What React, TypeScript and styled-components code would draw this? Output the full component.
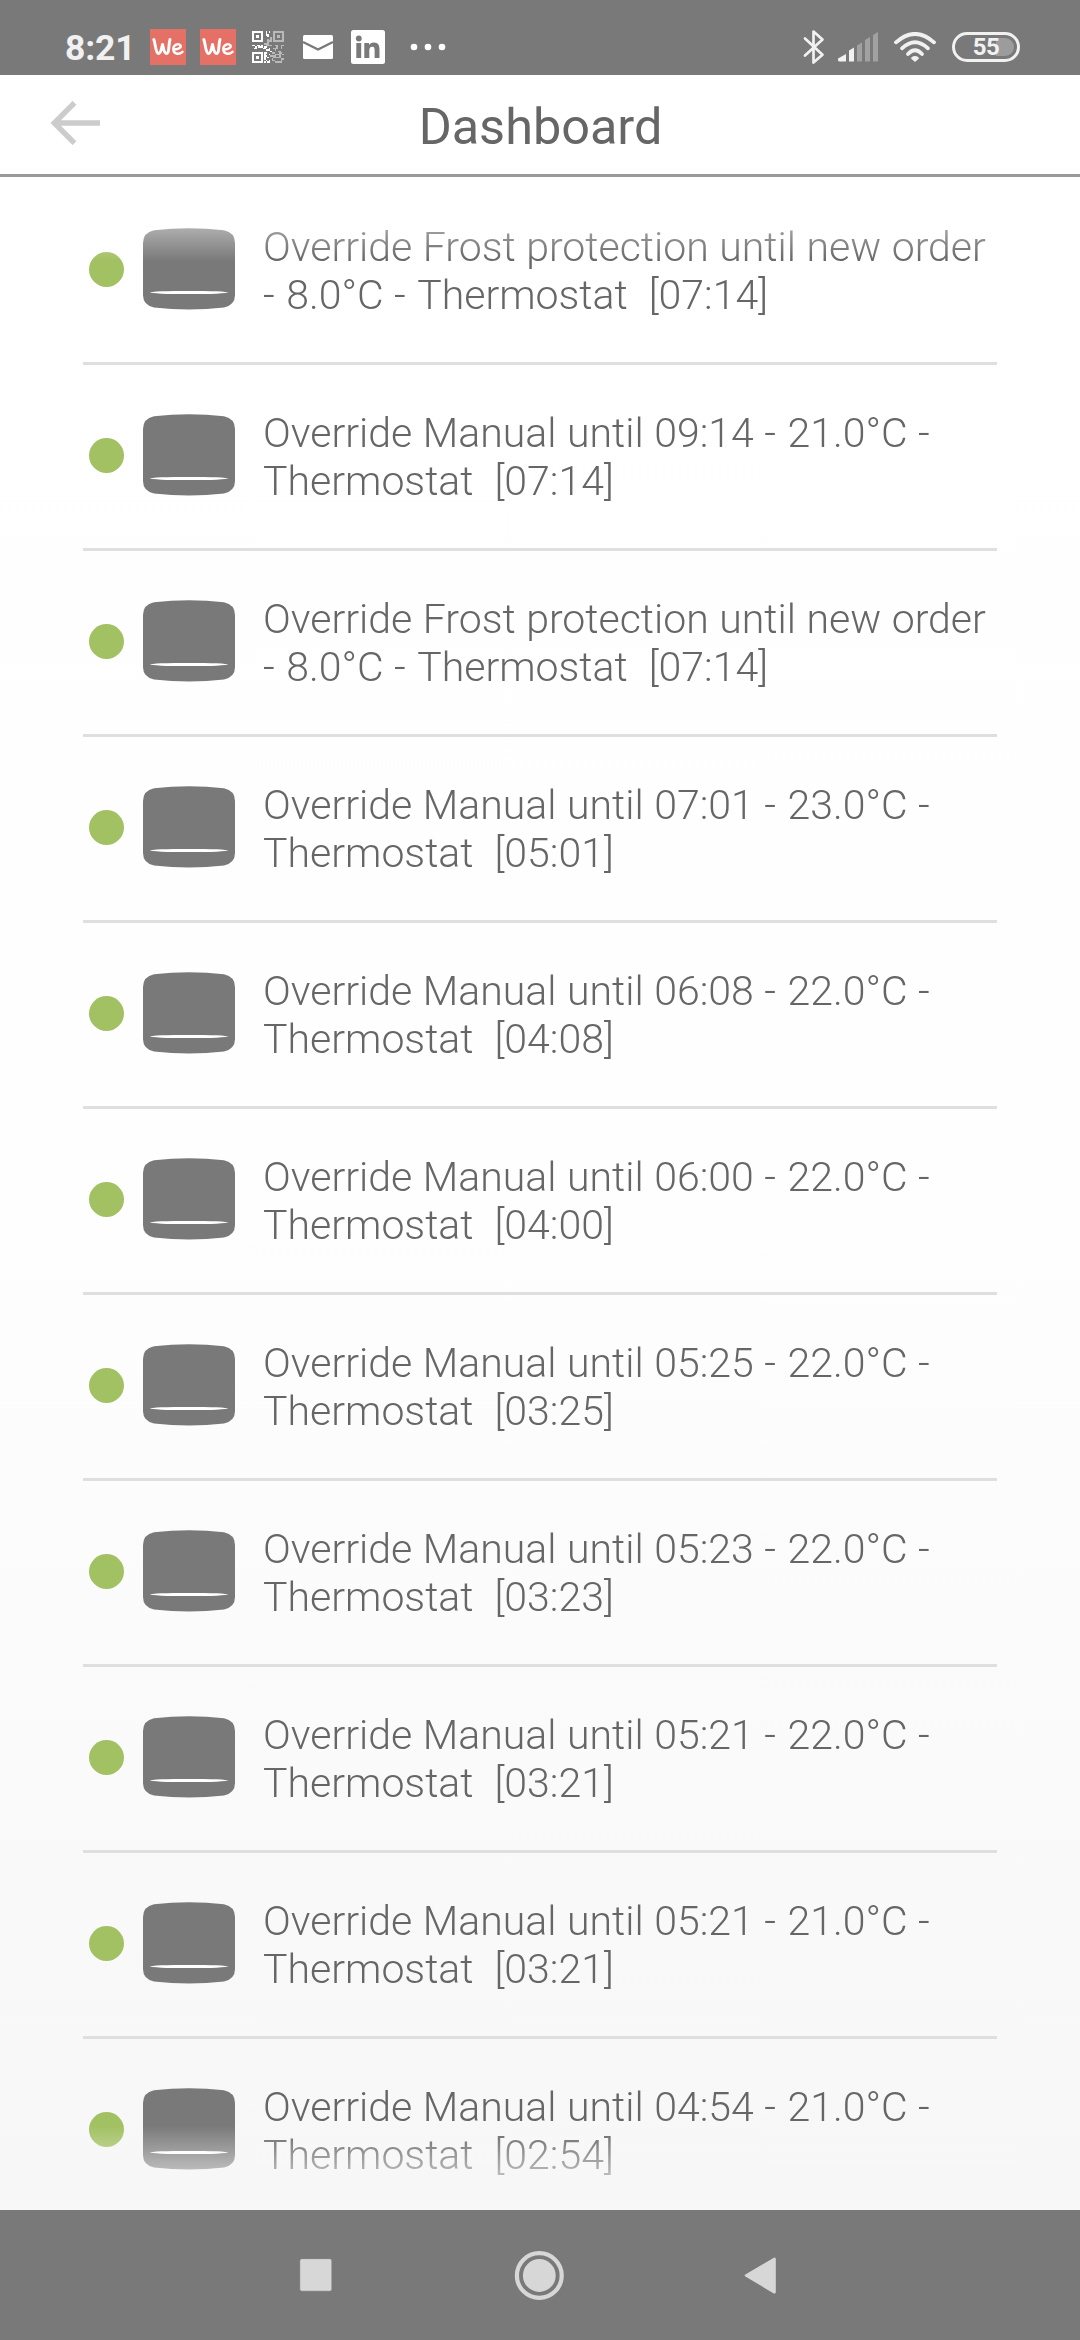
import React from "react";
import styled, { createGlobalStyle } from "styled-components";

const GlobalStyle = createGlobalStyle`
  html, body { margin: 0; padding: 0; }
  body { background: #fff; font-family: Roboto, "Liberation Sans", sans-serif; }
  * { box-sizing: border-box; }
  svg { display: block; flex: none; }
`;

const Screen = styled.div`
  width: 1080px;
  height: 2340px;
  display: flex;
  flex-direction: column;
  overflow: hidden;
  background: linear-gradient(to bottom, #fff 0, #fefefe 1200px, #f7f7f7 2210px);
`;

const StatusBar = styled.header`
  height: 75px;
  flex: none;
  display: flex;
  justify-content: space-between;
  padding: 19px 60px 0 65px;
  background: #797979;
`;

const StatusGroup = styled.div`
  display: flex;
  align-items: center;
  height: 56px;
`;

const Clock = styled.span`
  width: 85px;
  font-size: 35.5px;
  line-height: 56px;
  font-weight: 700;
  letter-spacing: -0.2px;
  color: #f1f1f1;
  padding-top: 2px;
`;

const WeTile = styled.span`
  width: 36px;
  height: 36px;
  margin-right: 14px;
  display: flex;
  align-items: center;
  justify-content: center;
  background: #e57166;
`;

const Gap = styled.span<{ $w: number }>`
  width: ${(p) => p.$w}px;
  flex: none;
`;

const TitleBar = styled.div`
  height: 102px;
  flex: none;
  display: grid;
  grid-template-columns: 150px 1fr 150px;
  align-items: center;
  border-bottom: 3px solid #999;
  background: #fff;
`;

const BackButton = styled.button`
  border: 0;
  padding: 0 0 4px 50px;
  background: none;
`;

const Title = styled.h1`
  margin: 0;
  text-align: center;
  font-size: 50.4px;
  line-height: 60px;
  padding: 4px 0 0 1px;
  font-weight: 400;
  color: #666;
`;

const Log = styled.main`
  flex: 1;
  min-height: 0;
  overflow: hidden;
  padding: 2px 83px 0;
  mask-image: linear-gradient(
    to bottom,
    transparent 0,
    #000 84px,
    #000 calc(100% - 84px),
    transparent 100%
  );
`;

const Entry = styled.article`
  height: 186px;
  display: flex;
  align-items: center;
  padding: 0 0 3px 6px;
  border-bottom: 3px solid #dfdfdf;
`;

const Dot = styled.span`
  width: 35px;
  height: 35px;
  flex: none;
  margin-right: 19px;
  border-radius: 50%;
  background: #a2c162;
`;

const Message = styled.p`
  margin: 0 0 0 28px;
  padding-top: 4px;
  font-size: 41px;
  line-height: 48px;
  font-weight: 300;
  word-spacing: 0.5px;
  color: #666;
  white-space: pre;
`;

/* Each word is shaped on its own, so no kerning is applied across spaces. */
const Word = styled.span<{ $dash: boolean }>`
  display: inline-block;
  padding-right: ${(p) => (p.$dash ? 0.9 : 0)}px;
`;

const NavBar = styled.nav`
  height: 130px;
  flex: none;
  display: flex;
  align-items: center;
  padding-left: 298px;
  background: #797979;
`;

const entries: string[] = [
  "Override Frost protection until new order\n- 8.0°C - Thermostat  [07:14]",
  "Override Manual until 09:14 - 21.0°C -\nThermostat  [07:14]",
  "Override Frost protection until new order\n- 8.0°C - Thermostat  [07:14]",
  "Override Manual until 07:01 - 23.0°C -\nThermostat  [05:01]",
  "Override Manual until 06:08 - 22.0°C -\nThermostat  [04:08]",
  "Override Manual until 06:00 - 22.0°C -\nThermostat  [04:00]",
  "Override Manual until 05:25 - 22.0°C -\nThermostat  [03:25]",
  "Override Manual until 05:23 - 22.0°C -\nThermostat  [03:23]",
  "Override Manual until 05:21 - 22.0°C -\nThermostat  [03:21]",
  "Override Manual until 05:21 - 21.0°C -\nThermostat  [03:21]",
  "Override Manual until 04:54 - 21.0°C -\nThermostat  [02:54]",
];

const Device = () => (
  <svg width="92" height="82" viewBox="0 0 92 82">
    <path
      d="M11 2.2Q46-1.8 81 2.2Q92 4.5 92 15V67Q92 77 81 79.5Q46 83.5 11 79.5Q0 77 0 67V15Q0 4.5 11 2.2Z"
      fill="#797979"
    />
    <ellipse cx="46" cy="64.5" rx="39" ry="1.600" fill="#fff" />
  </svg>
);

const WeMark = () => (
  <svg width="36" height="36" viewBox="0 0 36 36" fill="none" stroke="#fff" strokeLinecap="round" strokeLinejoin="round">
    <path d="M3.800 10.500C5.500 14 5.500 24.500 8.500 24.500C11 24.500 11.500 19 12.500 15.500C13.500 19 14 24.500 16.500 24.500C19.500 24.500 18.500 15 20 10.500" strokeWidth="2.900" />
    <path d="M24 20.500C28.500 20.500 31.500 18.500 30.500 16.500C28.500 13.800 23.300 15.500 23.300 20C23.300 25.500 29 26 32.500 22.800" strokeWidth="2.400" />
  </svg>
);

const QR_ROWS = [
  "1111111..1.1..2222222",
  "1.....1..1....2.....2",
  "1.....1..11...2.....2",
  "1..1..1...1...2..2..2",
  "1.....1.....2.2.....2",
  "1.....1...2.2.2.....2",
  "1111111...222.2222222",
  "..........2..........",
  "........222..........",
  "11.11.1..2222..22..22",
  "..1.111.11......2..2.",
  ".11....11..1..222..2.",
  ".........111...2.....",
  "............1....22..",
  "1111111.11...22...22.",
  "1.....1.1..1...2222.2",
  "1.....1.11..2222..2..",
  "1..1..1.1.1...22222..",
  "1.....1.1....2.....22",
  "1.....1..1.1.22....2.",
  "1111111.1.11...22222.",
];

const QrIcon = () => (
  <svg width="32" height="32" viewBox="0 0 21 21" shapeRendering="crispEdges">
    {QR_ROWS.flatMap((row, y) =>
      [...row].map((c, x) =>
        c === "." ? null : (
          <rect key={`${x}-${y}`} x={x} y={y} width="1" height="1" fill={c === "1" ? "#fff" : "#b9b9b9"} />
        )
      )
    )}
    <rect x="2.600" y="2.600" width="2" height="2" fill="#fff" />
    <rect x="2.600" y="16.400" width="2" height="2" fill="#fff" />
    <rect x="16.400" y="2.600" width="2" height="2" fill="#b9b9b9" />
  </svg>
);

const MailIcon = () => (
  <svg width="30" height="24" viewBox="0 0 30 24">
    <rect width="30" height="24" rx="1.500" fill="#fff" />
    <path d="M0 7L15 14.500L30 7" fill="none" stroke="#797979" strokeWidth="2.400" />
  </svg>
);

const LinkedInIcon = () => (
  <svg width="34" height="34" viewBox="0 0 34 34">
    <rect width="34" height="34" rx="2.500" fill="#fff" />
    <g fill="#797979">
      <circle cx="7.800" cy="8.500" r="2.900" />
      <path d="M5.300 13H10.200V28H5.300Z" />
      <path d="M13.300 13H18V15.100C19 13.500 20.700 12.600 22.800 12.600C27.500 12.600 28.500 15.700 28.500 19.800V28H23.600V20.700C23.600 19 23.600 16.800 21.200 16.800C18.700 16.800 18.300 18.700 18.300 20.600V28H13.300Z" />
    </g>
  </svg>
);

const MoreDots = () => (
  <svg width="36" height="8" viewBox="0 0 36 8" fill="#fff">
    <circle cx="4" cy="4" r="3.300" />
    <circle cx="18" cy="4" r="3.300" />
    <circle cx="32" cy="4" r="3.300" />
  </svg>
);

const BluetoothIcon = () => (
  <svg width="22" height="36" viewBox="0 0 22 36" fill="none" stroke="#f1f1f1" strokeWidth="2.700" strokeLinejoin="round" strokeLinecap="round">
    <path d="M2 9.500L19.500 25.800L10.500 33.500V2.500L19.500 10.500L2 26.500" />
  </svg>
);

const SignalIcon = () => (
  <svg width="40" height="30" viewBox="0 0 40 30">
    <path d="M0 28V26.500L8 22V29Q8 29.500 7 29.500H1.500Q0 29.500 0 28Z" fill="#f1f1f1" />
    <path d="M11 18.500L16 15.500V29.500H11Z" fill="#f1f1f1" />
    <g fill="#a1a1a1">
      <path d="M19 13.500L24 10.500V29.500H19Z" />
      <path d="M27 8L32 5V29.500H27Z" />
      <path d="M35 3L40 0V29.500H35Z" />
    </g>
  </svg>
);

const WifiIcon = () => (
  <svg width="42" height="30" viewBox="0 0 42 30" fill="none" stroke="#f1f1f1" strokeWidth="3.800" strokeLinecap="round">
    <path d="M2 10.300Q21-6.500 40 10.300" />
    <path d="M8 16.300Q21 4 34 16.300" />
    <path d="M14 22Q21 14.500 28 22" />
    <path d="M21 30L17 26.500Q17.500 24 21 24Q24.500 24 25 26.500Z" fill="#f1f1f1" stroke="none" />
  </svg>
);

const Battery = styled.span`
  width: 68px;
  height: 30px;
  display: flex;
  align-items: center;
  justify-content: center;
  border: 3px solid #f1f1f1;
  border-radius: 15px;
`;

const BatteryFill = styled.span`
  width: 56px;
  height: 18px;
  border-radius: 9px;
  display: flex;
  align-items: center;
  justify-content: center;
  background: linear-gradient(to right, transparent 38px, #9c9c9c 38px);
  color: #f1f1f1;
  font-size: 24px;
  line-height: 18px;
  letter-spacing: -0.5px;
  font-weight: 700;
`;

export default function App() {
  return (
    <>
      <GlobalStyle />
      <Screen>
        <StatusBar>
          <StatusGroup>
            <Clock>8:21</Clock>
            <WeTile><WeMark /></WeTile>
            <WeTile><WeMark /></WeTile>
            <Gap $w={2} />
            <QrIcon />
            <Gap $w={19} />
            <MailIcon />
            <Gap $w={18} />
            <LinkedInIcon />
            <Gap $w={25} />
            <MoreDots />
          </StatusGroup>
          <StatusGroup>
            <BluetoothIcon />
            <Gap $w={13} />
            <SignalIcon />
            <Gap $w={16} />
            <WifiIcon />
            <Gap $w={16} />
            <Battery><BatteryFill>55</BatteryFill></Battery>
          </StatusGroup>
        </StatusBar>
        <TitleBar>
          <BackButton aria-label="Back">
            <svg width="50" height="44" viewBox="0 0 50 44" fill="none" stroke="#ccc" strokeWidth="5.400">
              <path d="M24.500 1.800L4.300 22L24.500 42.200M5 22H50" />
            </svg>
          </BackButton>
          <Title>Dashboard</Title>
        </TitleBar>
        <Log>
          {entries.map((text, i) => (
            <Entry key={i}>
              <Dot />
              <Device />
              <Message>
                {text.split(/(\s+)/).map((part, j) =>
                  /\S/.test(part) ? (
                    <Word key={j} $dash={part === "-"}>{part}</Word>
                  ) : (
                    part
                  )
                )}
              </Message>
            </Entry>
          ))}
        </Log>
        <NavBar>
          <svg width="34" height="50" viewBox="0 0 34 50">
            <rect x="1.800" y="8.700" width="32" height="32.500" rx="2" fill="#d7d7d7" stroke="#6a6a6a" strokeWidth="0.500" />
          </svg>
          <Gap $w={182} />
          <svg width="50" height="50" viewBox="0 0 50 50">
            <circle cx="25.300" cy="25.500" r="22.400" fill="none" stroke="#d7d7d7" strokeWidth="4.200" />
            <circle cx="25.300" cy="25.500" r="16.400" fill="#d7d7d7" />
          </svg>
          <Gap $w={180} />
          <svg width="34" height="50" viewBox="0 0 34 50">
            <path d="M2 25.500L30.500 8.900V42.300Z" fill="#d7d7d7" stroke="#d7d7d7" strokeWidth="2.600" strokeLinejoin="round" />
          </svg>
        </NavBar>
      </Screen>
    </>
  );
}
